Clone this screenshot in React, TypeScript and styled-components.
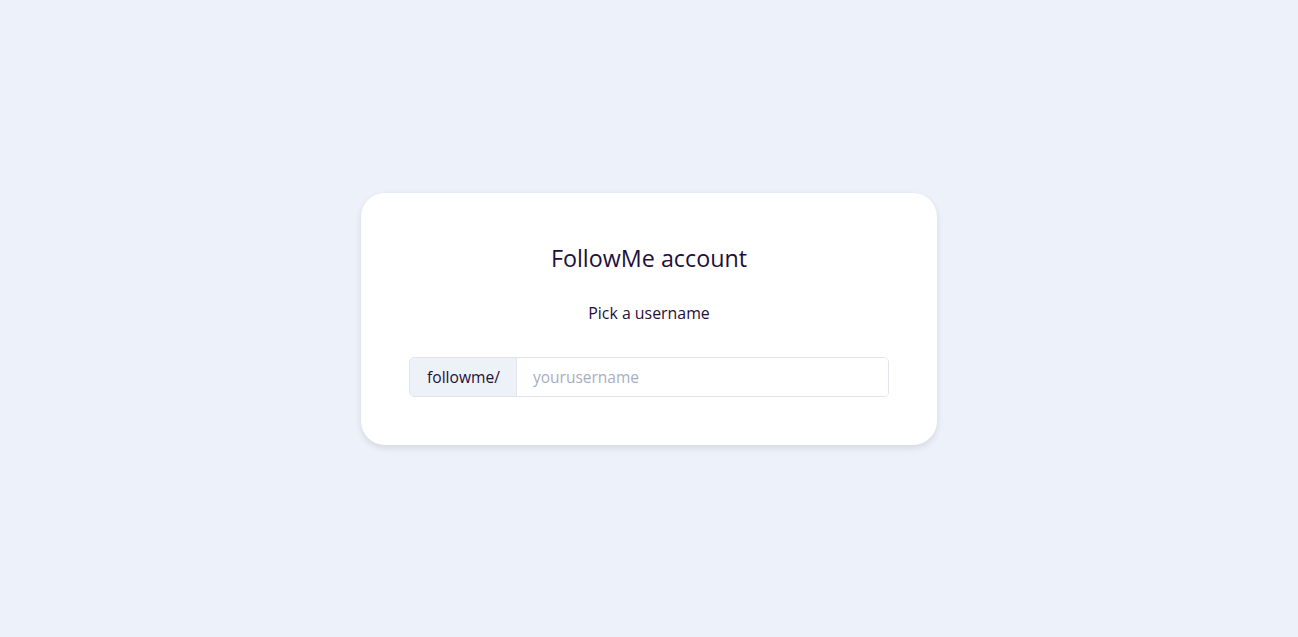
import React from "react";
import styled, { createGlobalStyle } from "styled-components";

const Global = createGlobalStyle`
  html, body { margin: 0; padding: 0; }
  body {
    background: #edf1f9;
    font-family: "Open Sans", "Liberation Sans", sans-serif;
    color: #1f0f3c;
  }
`;

const Page = styled.div`
  min-height: 637px;
  display: flex;
  align-items: center;
  justify-content: center;
`;

const Card = styled.div`
  width: 576px;
  box-sizing: border-box;
  background: #ffffff;
  border-radius: 24px;
  padding: 48px;
  box-shadow: 0 3px 6px rgba(30, 40, 80, 0.12);
  display: flex;
  flex-direction: column;
  align-items: center;
`;

const Title = styled.h1`
  margin: 0;
  font-size: 23.3px;
  font-weight: 400;
  line-height: 35px;
`;

const Subtitle = styled.p`
  margin: 25px 0 0;
  font-size: 15.9px;
  line-height: 24px;
`;

const Group = styled.div`
  margin-top: 32px;
  width: 100%;
  height: 40px;
  box-sizing: border-box;
  display: flex;
  border: 1px solid #e1e4ef;
  border-radius: 5px;
  overflow: hidden;
`;

const Prefix = styled.span`
  width: 107px;
  box-sizing: border-box;
  padding-left: 17px;
  display: flex;
  align-items: center;
  background: #edf1f8;
  border-right: 1px solid #e1e4ef;
  font-size: 15.6px;
  color: #1f0f3c;
`;

const Input = styled.input`
  flex: 1;
  border: none;
  outline: none;
  padding: 0 16px;
  font-family: inherit;
  font-size: 15.5px;
  color: #1f0f3c;
  background: #fff;
  &::placeholder { color: #a8adc6; }
`;

export default function App() {
  return (
    <>
      <Global />
      <Page>
        <Card>
          <Title>FollowMe account</Title>
          <Subtitle>Pick a username</Subtitle>
          <Group>
            <Prefix>followme/</Prefix>
            <Input placeholder="yourusername" />
          </Group>
        </Card>
      </Page>
    </>
  );
}
